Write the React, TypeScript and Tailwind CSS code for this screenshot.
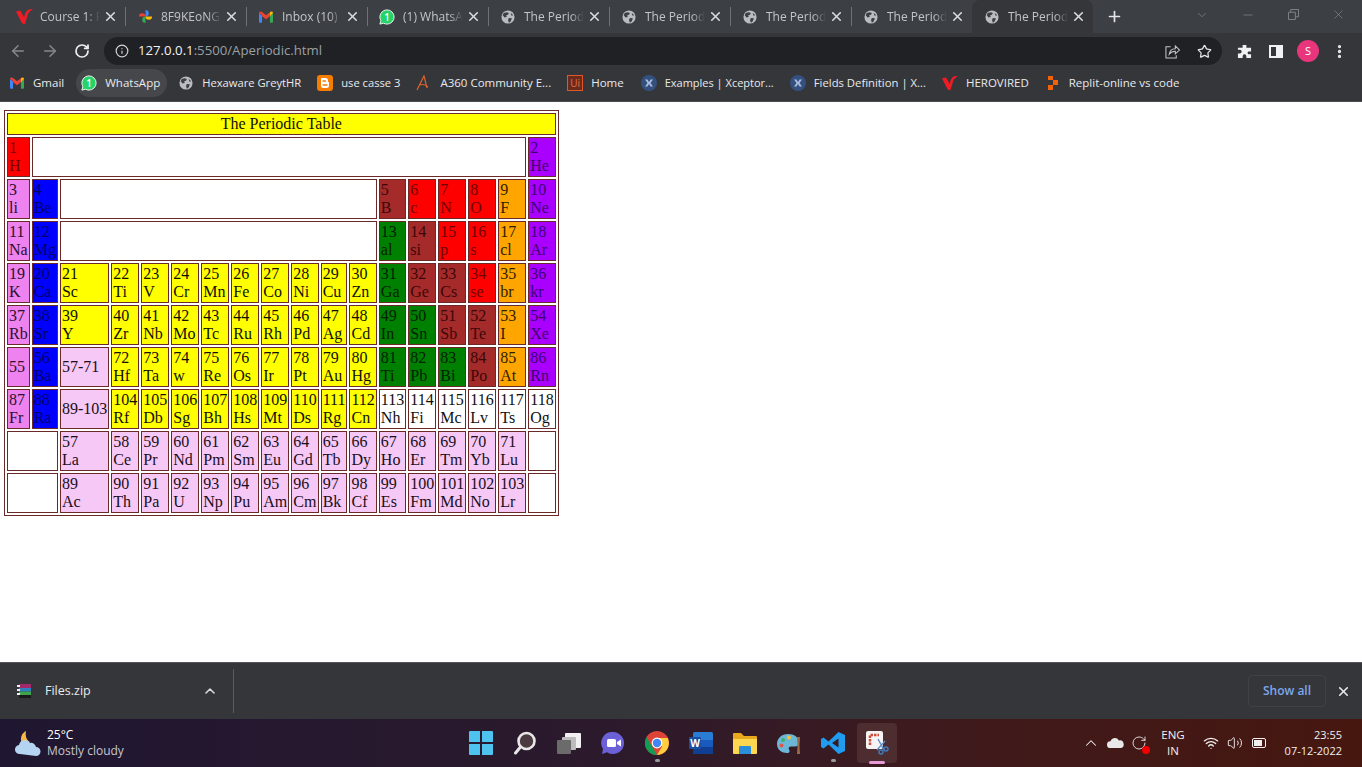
import { Minus, Plus, X, ChevronDown, ChevronUp, ArrowLeft, ArrowRight, RotateCw, Info, Star, EllipsisVertical, Wifi, Volume2 } from 'lucide-react';
import type { ReactNode } from 'react';

const V = 'bg-[#ee82ee] text-[#2c102c]';
const B = 'bg-[#0000ff] text-[#000066]';
const L = 'bg-[#f6c8f6] text-[#1a0f1a]';
const Y = 'bg-[#ffff00] text-[#111100]';
const W = 'bg-white text-[#111111]';
const G = 'bg-[#008000] text-[#001e00]';
const M = 'bg-[#a52a2a] text-[#3a0808]';
const R = 'bg-[#ff0000] text-[#6e0000]';
const O = 'bg-[#ffa500] text-[#2e1e00]';
const P = 'bg-[#a900ff] text-[#3c0070]';

type Cell = [string, string, string, number?];

const rows: Cell[][] = [
  [['1', 'H', R], ['', '', W, 16], ['2', 'He', P]],
  [['3', 'li', V], ['4', 'Be', B], ['', '', W, 10], ['5', 'B', M], ['6', 'c', R], ['7', 'N', R], ['8', 'O', R], ['9', 'F', O], ['10', 'Ne', P]],
  [['11', 'Na', V], ['12', 'Mg', B], ['', '', W, 10], ['13', 'al', G], ['14', 'si', M], ['15', 'p', R], ['16', 's', R], ['17', 'cl', O], ['18', 'Ar', P]],
  [['19', 'K', V], ['20', 'Ca', B], ['21', 'Sc', Y], ['22', 'Ti', Y], ['23', 'V', Y], ['24', 'Cr', Y], ['25', 'Mn', Y], ['26', 'Fe', Y], ['27', 'Co', Y], ['28', 'Ni', Y], ['29', 'Cu', Y], ['30', 'Zn', Y], ['31', 'Ga', G], ['32', 'Ge', M], ['33', 'Cs', M], ['34', 'se', R], ['35', 'br', O], ['36', 'kr', P]],
  [['37', 'Rb', V], ['38', 'Sr', B], ['39', 'Y', Y], ['40', 'Zr', Y], ['41', 'Nb', Y], ['42', 'Mo', Y], ['43', 'Tc', Y], ['44', 'Ru', Y], ['45', 'Rh', Y], ['46', 'Pd', Y], ['47', 'Ag', Y], ['48', 'Cd', Y], ['49', 'In', G], ['50', 'Sn', G], ['51', 'Sb', M], ['52', 'Te', M], ['53', 'I', O], ['54', 'Xe', P]],
  [['55', '', V], ['56', 'Ba', B], ['57-71', '', L], ['72', 'Hf', Y], ['73', 'Ta', Y], ['74', 'w', Y], ['75', 'Re', Y], ['76', 'Os', Y], ['77', 'Ir', Y], ['78', 'Pt', Y], ['79', 'Au', Y], ['80', 'Hg', Y], ['81', 'Ti', G], ['82', 'Pb', G], ['83', 'Bi', G], ['84', 'Po', M], ['85', 'At', O], ['86', 'Rn', P]],
  [['87', 'Fr', V], ['88', 'Ra', B], ['89-103', '', L], ['104', 'Rf', Y], ['105', 'Db', Y], ['106', 'Sg', Y], ['107', 'Bh', Y], ['108', 'Hs', Y], ['109', 'Mt', Y], ['110', 'Ds', Y], ['111', 'Rg', Y], ['112', 'Cn', Y], ['113', 'Nh', W], ['114', 'Fi', W], ['115', 'Mc', W], ['116', 'Lv', W], ['117', 'Ts', W], ['118', 'Og', W]],
  [['', '', W, 2], ['57', 'La', L], ['58', 'Ce', L], ['59', 'Pr', L], ['60', 'Nd', L], ['61', 'Pm', L], ['62', 'Sm', L], ['63', 'Eu', L], ['64', 'Gd', L], ['65', 'Tb', L], ['66', 'Dy', L], ['67', 'Ho', L], ['68', 'Er', L], ['69', 'Tm', L], ['70', 'Yb', L], ['71', 'Lu', L], ['', '', W]],
  [['', '', W, 2], ['89', 'Ac', L], ['90', 'Th', L], ['91', 'Pa', L], ['92', 'U', L], ['93', 'Np', L], ['94', 'Pu', L], ['95', 'Am', L], ['96', 'Cm', L], ['97', 'Bk', L], ['98', 'Cf', L], ['99', 'Es', L], ['100', 'Fm', L], ['101', 'Md', L], ['102', 'No', L], ['103', 'Lr', L], ['', '', W]],
];

function Globe() {
  return (
    <svg viewBox="0 0 16 16" className="w-[14px] h-[14px] shrink-0">
      <circle cx="8" cy="8" r="7.5" fill="#b9bcc0" />
      <path d="M3 3.5 6.5 2.5 9 3.5 8 5.5 6 6 6.5 8 4 8.5 2 6ZM9 9l3.5.5L11 13l-2 1.5-1-3Z M11 3l3 3-2 .5Z" fill="#3c3f43" />
    </svg>
  );
}

function HeroV({ size = 17 }: { size?: number }) {
  return (
    <svg viewBox="0 0 20 18" width={size} height={size} className="shrink-0">
      <path d="M0 3 5 2 9.5 10 11 5 14 1 20 0 14.500 5 10.500 18 7 17Z" fill="#ee1c25" />
    </svg>
  );
}

function Pinwheel() {
  return (
    <svg viewBox="0 0 16 16" className="w-[15px] h-[15px] shrink-0">
      <path d="M8 8V1a3.500 3.500 0 0 1 0 7Z" fill="#ea4335" transform="rotate(-90 8 8)" />
      <path d="M8 8V1a3.500 3.500 0 0 1 0 7Z" fill="#4285f4" />
      <path d="M8 8V1a3.500 3.500 0 0 1 0 7Z" fill="#34a853" transform="rotate(180 8 8)" />
      <path d="M8 8V1a3.500 3.500 0 0 1 0 7Z" fill="#fbbc04" transform="rotate(90 8 8)" />
    </svg>
  );
}

function Gmail() {
  return (
    <svg viewBox="0 0 16 13" className="w-[14px] h-[12px] shrink-0">
      <path d="M0 2v10a1 1 0 0 0 1 1h2.500V5Z" fill="#4285f4" />
      <path d="M12.500 5v8H15a1 1 0 0 0 1-1V2Z" fill="#34a853" />
      <path d="M0 2c0-2 2-2.500 3.500-1L8 4.500v3L0 2Z" fill="#ea4335" />
      <path d="M3.500 1 8 4.500 12.500 1v4.500L8 9 3.500 5.500Z" fill="#ea4335" />
      <path d="M12.500 1C14-.5 16 0 16 2l-3.500 3.500Z" fill="#fbbc04" />
    </svg>
  );
}

function Whats() {
  return (
    <svg viewBox="0 0 18 18" className="w-4 h-4 shrink-0">
      <path d="M9 1a8 8 0 0 1 0 16 8 8 0 0 1-3.800-1L1 17l1.100-4A8 8 0 0 1 9 1Z" fill="#25d366" stroke="#fff" strokeWidth="1" />
      <text x="9" y="13" textAnchor="middle" fontSize="11" fontFamily="Open Sans" fontWeight="600" fill="#fff">1</text>
    </svg>
  );
}

function Tab({ icon, title, active, sep = true }: { icon: ReactNode; title: string; active?: boolean; sep?: boolean }) {
  return (
    <div className={`w-[121px] h-[33px] flex items-center pl-3 shrink-0 relative ${active ? 'bg-[#35363a] rounded-t-lg' : ''}`}>
      <div className="w-4 flex justify-center shrink-0">{icon}</div>
      <span className="ml-2 w-[60px] overflow-hidden whitespace-nowrap text-xs text-[#c2c5c9] [mask-image:linear-gradient(90deg,#000_78%,transparent)]">{title}</span>
      <X size={15} strokeWidth={2.6} className="ml-[3px] text-[#d8dadd] shrink-0" />
      {sep && !active && <div className="absolute right-[-1px] top-[7px] w-px h-[19px] bg-[#6e7175]" />}
    </div>
  );
}

function Bookmark({ icon, label, className = '', textClass = 'text-[11.5px]' }: { icon: ReactNode; label: string; className?: string; textClass?: string }) {
  return (
    <div className={`flex items-center h-7 gap-2 px-2 shrink-0 ${className}`}>
      <div className="w-4 flex justify-center shrink-0">{icon}</div>
      <span className={`${textClass} text-[#e8eaed] whitespace-nowrap`}>{label}</span>
    </div>
  );
}

function XceptorIcon() {
  return (
    <svg viewBox="0 0 16 16" className="w-4 h-4 shrink-0">
      <circle cx="8" cy="8" r="8" fill="#34507f" />
      <path d="M4 4.500h2.500L8 7l1.500-2.500H12L9.500 8l2.500 3.500H9.500L8 9l-1.500 2.500H4L6.500 8Z" fill="#a9bbdc" />
    </svg>
  );
}

function Weather() {
  return (
    <svg viewBox="0 0 26 26" className="w-[26px] h-[26px] shrink-0">
      <path d="M11 1C7 3 5 7 6.500 13c2 1 6 1 8.500-1C11.500 10 10 6 11 1Z" fill="#f7b84b" />
      <path d="M5 24a4.500 4.500 0 0 1-1-9 6 6 0 0 1 11-2 5 5 0 0 1 6 4 4.500 4.500 0 0 1 0 9Z" fill="#b4d4f2" />
    </svg>
  );
}

function TaskSlot({ children, dot }: { children: ReactNode; dot?: boolean }) {
  return (
    <div className="w-11 h-full shrink-0 flex items-center justify-center relative">
      {children}
      {dot && <div className="absolute bottom-[5px] w-[5px] h-[3px] rounded-full bg-[#9a9a9a]" />}
    </div>
  );
}

function TaskIcons() {
  return (
    <div className="flex items-center h-full">
      <TaskSlot>
        <svg viewBox="0 0 24 24" className="w-6 h-6">
          <path d="M0 1a1 1 0 0 1 1-1h10v11H0ZM13 0h10a1 1 0 0 1 1 1v10H13ZM0 13h11v11H1a1 1 0 0 1-1-1ZM13 13h11v10a1 1 0 0 1-1 1H13Z" fill="#4fc3ef" />
        </svg>
      </TaskSlot>
      <TaskSlot>
        <svg viewBox="0 0 24 24" className="w-6 h-6">
          <circle cx="13.500" cy="10" r="8" fill="#4b3a40" stroke="#e8e8e8" strokeWidth="2.600" />
          <path d="M7.500 16 2.500 22" stroke="#e8e8e8" strokeWidth="3" strokeLinecap="round" />
        </svg>
      </TaskSlot>
      <TaskSlot>
        <svg viewBox="0 0 24 24" className="w-6 h-6">
          <rect x="8" y="2" width="16" height="15" fill="#f1f1f1" rx="1" />
          <rect x="5" y="6" width="14" height="13" fill="#bcbcbc" rx="1" />
          <rect x="0" y="9" width="14" height="14" fill="#6b6b6b" rx="1" />
        </svg>
      </TaskSlot>
      <TaskSlot>
        <svg viewBox="0 0 24 24" className="w-6 h-6">
          <path d="M12 1a11 11 0 1 1-6 20.200L1 23l1-5A11 11 0 0 1 12 1Z" fill="#6b60d8" />
          <rect x="6" y="8" width="9" height="8" rx="1.500" fill="#fff" />
          <path d="M16 11l4-2.500v7L16 13Z" fill="#fff" />
        </svg>
      </TaskSlot>
      <TaskSlot dot>
        <svg viewBox="0 0 24 24" className="w-6 h-6">
          <circle cx="12" cy="12" r="12" fill="#db4437" />
          <path d="M12 24A12 12 0 0 1 1.600 6L7 15.500Z" fill="#0f9d58" />
          <path d="M12 24 17 15.500 12 7H22.800A12 12 0 0 1 12 24Z" fill="#ffcd40" />
          <circle cx="12" cy="12" r="5.400" fill="#fff" />
          <circle cx="12" cy="12" r="4.200" fill="#4285f4" />
        </svg>
      </TaskSlot>
      <TaskSlot>
        <svg viewBox="0 0 24 24" className="w-6 h-6">
          <rect x="4" y="1" width="20" height="22" rx="1.500" fill="#2b7cd3" />
          <rect x="4" y="16" width="20" height="7" fill="#103f91" />
          <rect x="4" y="9" width="20" height="7" fill="#185abd" />
          <rect x="0" y="6" width="12" height="12" rx="1" fill="#1a4ea3" />
          <text x="6" y="15.500" textAnchor="middle" fontSize="10" fontWeight="700" fontFamily="Open Sans" fill="#fff">W</text>
        </svg>
      </TaskSlot>
      <TaskSlot>
        <svg viewBox="0 0 24 24" className="w-6 h-6">
          <path d="M0 3a1 1 0 0 1 1-1h7l3 3h12a1 1 0 0 1 1 1v5H0Z" fill="#e8a91e" />
          <path d="M0 8h24v14a1 1 0 0 1-1 1H1a1 1 0 0 1-1-1Z" fill="#ffd64f" />
          <path d="M7 15h10a1 1 0 0 1 1 1v7H6v-7a1 1 0 0 1 1-1Z" fill="#2a8fd8" />
        </svg>
      </TaskSlot>
      <TaskSlot>
        <svg viewBox="0 0 24 24" className="w-6 h-6">
          <path d="M11 3C5 3 0 7 0 13s5 9 10 9c3 0 3-2 2-3.500s0-3 2-3h4c2 0 4-1 4-4C22 6 17 3 11 3Z" fill="#6cb7d8" />
          <circle cx="6" cy="9" r="2" fill="#3fb268" />
          <circle cx="12" cy="6.500" r="2" fill="#f4c430" />
          <circle cx="4.500" cy="14.500" r="2" fill="#e1574c" />
          <path d="M20 6h3l-.5 9 .5 8h-3l.5-8Z" fill="#9a6b46" />
        </svg>
      </TaskSlot>
      <TaskSlot dot>
        <svg viewBox="0 0 24 24" className="w-6 h-6">
          <path d="M17.500 1 24 4v16l-6.500 3L7.500 13.500 2.500 17.500 0 16V8l2.500-1.500 5 4ZM17.500 7.500 11 12l6.500 4.500Z" fill="#1f9cf0" />
        </svg>
      </TaskSlot>
      <TaskSlot>
        <div className="w-10 h-10 rounded bg-[#4d2d30] flex items-center justify-center">
          <svg viewBox="0 0 24 24" className="w-6 h-6">
            <rect x="1" y="0" width="17" height="18" rx="2" fill="#f5f3f3" />
            <path d="M5 14V4h9" stroke="#d24a3a" strokeWidth="2.500" strokeDasharray="2.500 1" fill="none" />
            <path d="M13 8 19 19M20 10 12 19" stroke="#5f90c8" strokeWidth="1.400" />
            <circle cx="21" cy="18" r="2" fill="none" stroke="#3e7cc0" strokeWidth="1.400" />
            <circle cx="16" cy="21" r="2" fill="none" stroke="#3e7cc0" strokeWidth="1.400" />
          </svg>
        </div>
        <div className="absolute bottom-[3px] w-4 h-[3px] rounded-full bg-[#e79ad8]" />
      </TaskSlot>
    </div>
  );
}

export default function App() {
  return (
    <div className="h-[767px] w-[1362px] overflow-hidden flex flex-col bg-white font-['Open_Sans',sans-serif]">
      {/* tabs */}
      <div className="h-[33px] bg-[#3c3f43] flex items-center pl-1 shrink-0">
        <Tab icon={<HeroV />} title="Course 1: F" />
        <Tab icon={<Pinwheel />} title="8F9KEoNG" />
        <Tab icon={<Gmail />} title="Inbox (10)" />
        <Tab icon={<Whats />} title="(1) WhatsA" />
        <Tab icon={<Globe />} title="The Period" />
        <Tab icon={<Globe />} title="The Period" />
        <Tab icon={<Globe />} title="The Period" />
        <Tab icon={<Globe />} title="The Period" sep={false} />
        <Tab icon={<Globe />} title="The Period" active />
        <Plus size={17} strokeWidth={2.4} className="ml-[13px] text-[#e3e5e8]" />
        <div className="ml-auto flex items-center text-[#85888c] h-full pb-1">
          <ChevronDown size={14} strokeWidth={1.2} className="mr-8" />
          <Minus size={14} strokeWidth={1.2} className="mr-[33px]" />
          <svg viewBox="0 0 12 12" className="w-[11px] h-[11px] mr-8">
            <path d="M.5 3.500h7.500v8H.5ZM3 3.500V.5h8.500v8H8" fill="none" stroke="currentColor" />
          </svg>
          <X size={15} strokeWidth={1.1} className="mr-4" />
        </div>
      </div>
      {/* toolbar */}
      <div className="h-[36px] bg-[#35363a] flex items-center shrink-0 pl-[9px]">
        <ArrowLeft size={18} className="text-[#85888c]" />
        <ArrowRight size={18} className="ml-[14px] text-[#85888c]" />
        <RotateCw size={16} strokeWidth={2.6} className="ml-[15px] text-[#eceef0]" />
        <div className="ml-[14px] w-[1118px] h-7 rounded-full bg-[#202124] flex items-center pl-[11px] pr-[10px]">
          <Info size={14} className="text-[#d3d5d8]" />
          <span className="ml-[9px] text-[13.2px] text-[#f1f3f4]">127.0.0.1<span className="text-[#9aa0a6]">:5500/Aperiodic.html</span></span>
          <svg viewBox="0 0 16 16" className="w-[15px] h-[15px] ml-auto" fill="none" stroke="#c4c7c5" strokeWidth="1.100">
            <path d="M6 3H1v12h11v-3" />
            <path d="M4.500 11c.5-4 3-6 6.500-6V2l4.500 4.500L11 10.500V7.800C8.500 7.800 6 9 4.500 11Z" />
          </svg>
          <Star size={15} strokeWidth={2} className="ml-[17px] text-[#e3e5e8]" />
        </div>
        <svg viewBox="0 0 16 16" className="w-[15px] h-[15px] ml-[15px]">
          <path d="M6 1h4v3h5v4h-3a2 2 0 0 0 0 3h3v4H10v-2a2 2 0 0 0-4 0v2H1v-5h2a2 2 0 0 0 0-4H1V4h5Z" fill="#f0f1f2" />
        </svg>
        <div className="w-[14px] h-[13px] ml-[17px] border-2 border-[#f0f1f2] flex justify-end">
          <div className="w-[5px] h-full bg-[#f0f1f2]" />
        </div>
        <div className="w-[22px] h-[22px] ml-[14px] rounded-full bg-[#e8357b] flex items-center justify-center text-[11px] text-white">S</div>
        <EllipsisVertical size={17} strokeWidth={2.6} className="ml-3 text-[#eceef0]" />
      </div>
      {/* bookmarks */}
      <div className="h-[33px] bg-[#35363a] border-b border-[#4a4b4f] flex items-center shrink-0 pl-px pb-1">
        <Bookmark icon={<Gmail />} label="Gmail" />
        <Bookmark icon={<Whats />} label="WhatsApp" className="rounded-full bg-[#46474b] ml-1 mr-[3px] pl-[5px] pr-[7px]" />
        <Bookmark icon={<Globe />} label="Hexaware GreytHR" textClass="text-[11.2px]" />
        <Bookmark
          icon={
            <svg viewBox="0 0 16 16" className="w-4 h-4 shrink-0">
              <rect width="16" height="16" rx="3" fill="#f57d00" />
              <path d="M5 3h3.500A2.500 2.500 0 0 1 11 5.500V7h1v3.500a2.500 2.500 0 0 1-2.500 2.500h-3A2.500 2.500 0 0 1 4 10.500V4a1 1 0 0 1 1-1Z" fill="#fff" />
              <path d="M6 6h2.500M6 10h4" stroke="#f57d00" strokeWidth="1.300" strokeLinecap="round" />
            </svg>
          }
          label="use casse 3"
          textClass="text-[11.2px]"
        />
        <Bookmark
          icon={
            <svg viewBox="0 0 16 16" className="w-4 h-4 shrink-0">
              <path d="M1 15 8 1l3 12M3 10c3-1 7 0 9 2" stroke="#d9652f" strokeWidth="1.200" fill="none" />
            </svg>
          }
          label="A360 Community E..."
        />
        <Bookmark
          icon={
            <div className="w-4 h-4 border border-[#e0562b] bg-[#6a2a1c] text-[#e8704a] text-[10px] leading-[14px] text-center shrink-0">Ui</div>
          }
          label="Home"
        />
        <Bookmark icon={<XceptorIcon />} label="Examples | Xceptor..." className="ml-px" textClass="text-[11px]" />
        <Bookmark icon={<XceptorIcon />} label="Fields Definition | X..." textClass="text-[11.3px]" />
        <Bookmark icon={<HeroV size={16} />} label="HEROVIRED" />
        <Bookmark
          icon={
            <svg viewBox="0 0 16 16" className="w-4 h-4 shrink-0">
              <path d="M3 1h5v4H3ZM8 5h5v5H8ZM3 10h5v5H3Z" fill="#f26207" />
            </svg>
          }
          label="Replit-online vs code"
        />
      </div>
      {/* page */}
      <main className="flex-1 bg-white pt-2 pl-1 font-['Liberation_Serif',serif] text-[16px] leading-[18px]">
        <table className="border-separate border-spacing-[2px] border border-[#6a2a2a]">
          <tbody>
            <tr>
              <td colSpan={18} className="bg-[#ffff00] text-[#111100] border border-[#6a2a2a] p-px text-center">The Periodic Table</td>
            </tr>
            {rows.map((row, i) => (
              <tr key={i}>
                {row.map((c, j) => (
                  <td key={j} colSpan={c[3] ?? 1} className={`${c[2]} border border-[#6a2a2a] p-px h-10`}>
                    {c[0]}
                    {c[1] && <br />}
                    {c[1]}
                  </td>
                ))}
              </tr>
            ))}
          </tbody>
        </table>
      </main>
      {/* downloads */}
      <div className="h-[57px] bg-[#35363a] border-t border-[#55565a] flex items-center shrink-0 pl-4">
        <svg viewBox="0 0 16 16" className="w-4 h-4 shrink-0">
          <rect x="3" y="1" width="12" height="4" fill="#a3286a" />
          <rect x="3" y="5" width="12" height="3.500" fill="#2f7fc0" />
          <rect x="3" y="8.500" width="12" height="3.500" fill="#3fa34d" />
          <rect x="3" y="12" width="12" height="3" fill="#1a1a1a" />
          <path d="M1 2h3v2H1ZM1 6h3v2H1ZM1 10h3v2H1Z" fill="#f1f1f1" />
        </svg>
        <span className="ml-[13px] text-[12.5px] text-[#e8eaed]">Files.zip</span>
        <ChevronUp size={16} strokeWidth={2.4} className="ml-[111px] text-[#d7d9dc]" />
        <div className="ml-[15px] w-px h-11 bg-[#595a5e]" />
        <div className="ml-auto mr-[10px] w-[78px] h-8 rounded border border-[#3f4145] flex items-center justify-center text-xs font-semibold text-[#7da7e8]">Show all</div>
        <X size={15} strokeWidth={2.6} className="mr-[11px] text-[#e8eaed]" />
      </div>
      {/* taskbar */}
      <div className="h-[48px] bg-[linear-gradient(90deg,#1f1631,#2c1a2c_45%,#3f1a1c_70%,#46170f)] flex items-center shrink-0 text-white">
        <div className="w-[459px] shrink-0 pl-[15px] flex items-center gap-[6px]">
          <Weather />
          <div className="leading-4 text-xs">
            <div>25°C</div>
            <div className="text-[#c8c6cc]">Mostly cloudy</div>
          </div>
        </div>
        <TaskIcons />
        <div className="ml-auto flex items-center pr-5 text-[#f0f0f0]">
          <ChevronUp size={18} strokeWidth={1.4} />
          <svg viewBox="0 0 20 14" className="w-[17px] h-3 ml-[7px]">
            <path d="M4 13a4 4 0 0 1 0-8 5.500 5.500 0 0 1 10-1 4.500 4.500 0 0 1 2 9Z" fill="#e8e8e8" />
          </svg>
          <div className="relative ml-[7px] mr-3">
            <RotateCw size={16} strokeWidth={1.3} />
            <div className="absolute right-[-3px] bottom-[-3px] w-2 h-2 rounded-full bg-[#f00000]" />
          </div>
          <div className="text-[11.5px] leading-4 text-center w-7">ENG<br />IN</div>
          <Wifi size={16} className="ml-4" />
          <Volume2 size={16} strokeWidth={1.4} className="ml-2" />
          <div className="ml-[9px] w-[14px] h-[10px] border border-[#f0f0f0] rounded-[2px] p-px mr-[14px]">
            <div className="w-2 h-full bg-[#f0f0f0]" />
          </div>
          <div className="text-[11px] leading-4 text-right w-[62px] whitespace-nowrap">23:55<br />07-12-2022</div>
        </div>
      </div>
    </div>
  );
}
